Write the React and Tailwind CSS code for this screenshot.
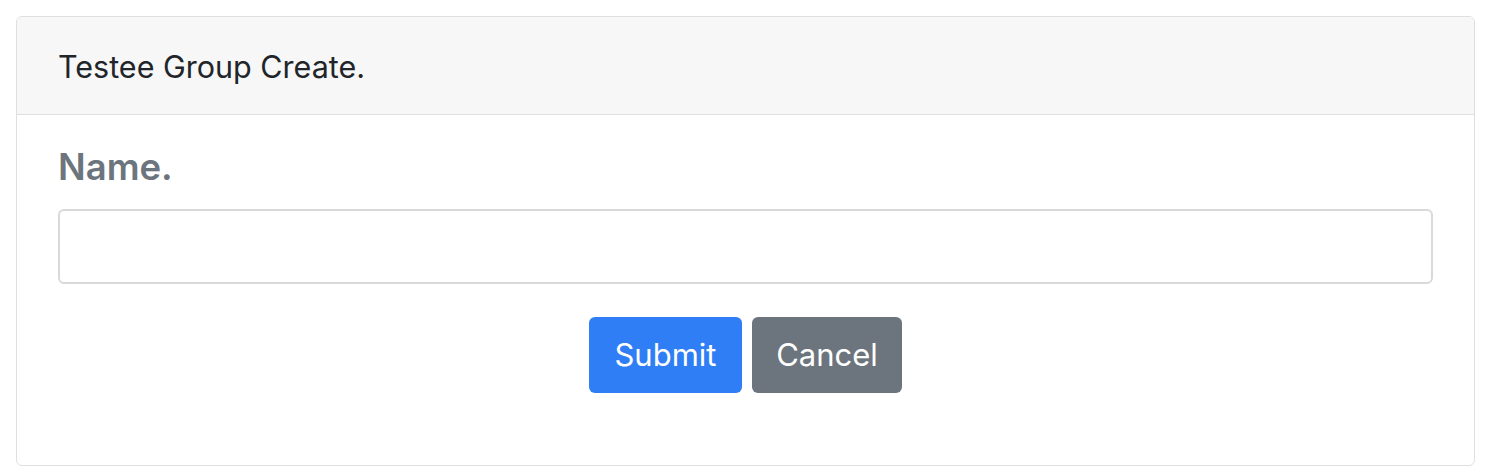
export default function App() {
  return (
    <div className="pl-4 pr-[14px] py-4 bg-white font-['Inter',sans-serif]">
      <div className="border border-[#dfdfdf] rounded-[6px] overflow-hidden">
        <div className="h-[98px] bg-[#f7f7f7] border-b border-[#dfdfdf] flex items-center px-[41px]">
          <span className="text-[30.5px] text-[#212529] pt-[2px]">Testee Group Create.</span>
        </div>
        <div className="px-[41px] pt-[30px] pb-[72px]">
          <label className="block text-[36.5px] font-semibold text-[#6c757d] leading-[44px]">Name.</label>
          <input
            type="text"
            className="mt-[20px] block w-full h-[75px] rounded-[6px] border-2 border-[#d9d9d9] outline-none"
          />
          <div className="mt-[33px] flex justify-center gap-[10px]">
            <button className="w-[153px] h-[76px] rounded-[6px] bg-[#2f7ef5] text-white text-[31px]">Submit</button>
            <button className="w-[150px] h-[76px] rounded-[6px] bg-[#6c757d] text-white text-[31px]">Cancel</button>
          </div>
        </div>
      </div>
    </div>
  );
}
